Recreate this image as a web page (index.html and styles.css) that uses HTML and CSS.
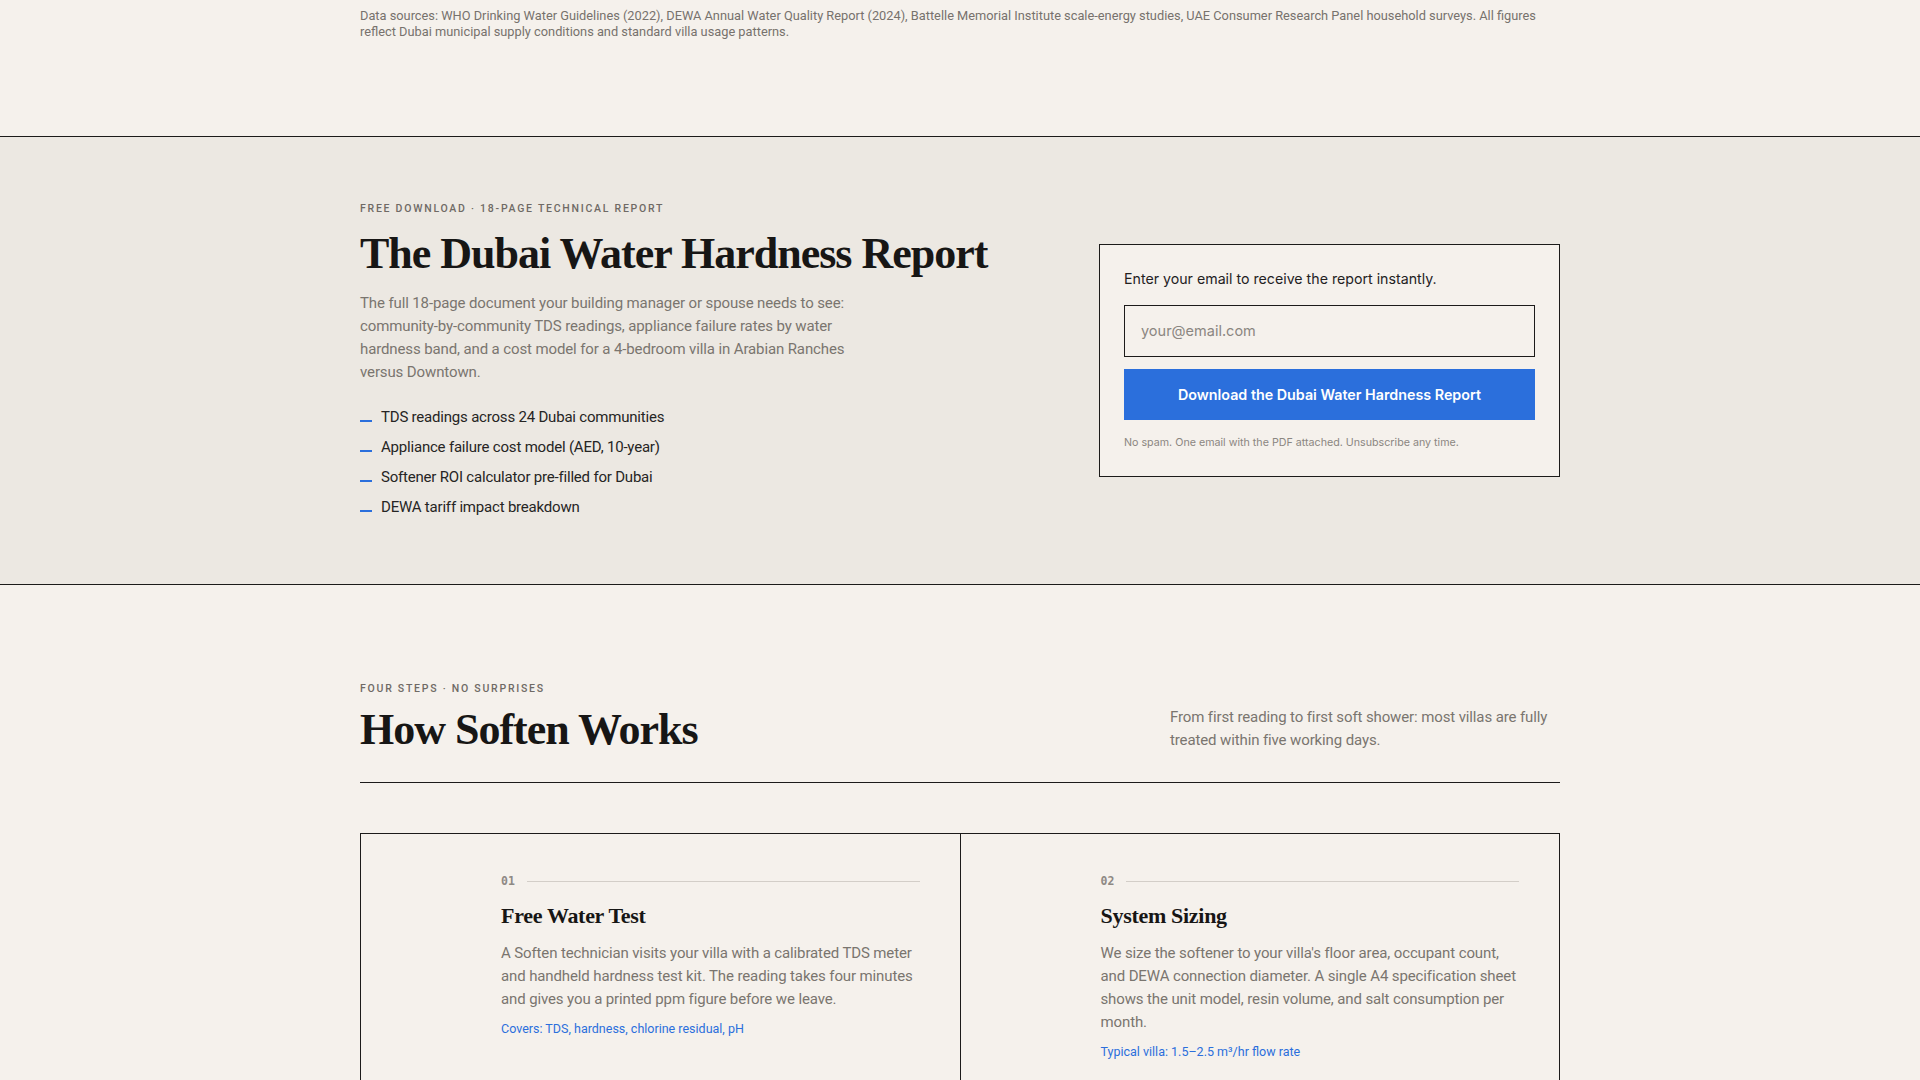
FILE: index.html
```html
<!DOCTYPE html>
<html lang="en">
<head>
<meta charset="utf-8">
<title>Soften — Dubai Water Hardness</title>
<link rel="stylesheet" href="styles.css">
</head>
<body>
<section class="sources">
  <div class="container">
    <p class="sources-text">Data sources: WHO Drinking Water Guidelines (2022), DEWA Annual Water Quality Report (2024), Battelle Memorial Institute scale-energy studies, UAE Consumer Research Panel household surveys. All figures reflect Dubai municipal supply conditions and standard villa usage patterns.</p>
  </div>
</section>

<section class="report">
  <div class="container report-grid">
    <div class="report-copy">
      <p class="eyebrow">Free Download · 18-Page Technical Report</p>
      <h1 class="display">The Dubai Water Hardness Report</h1>
      <p class="lead">The full 18-page document your building manager or spouse needs to see: community-by-community TDS readings, appliance failure rates by water hardness band, and a cost model for a 4-bedroom villa in Arabian Ranches versus Downtown.</p>
      <ul class="checklist">
        <li>TDS readings across 24 Dubai communities</li>
        <li>Appliance failure cost model (AED, 10-year)</li>
        <li>Softener ROI calculator pre-filled for Dubai</li>
        <li>DEWA tariff impact breakdown</li>
      </ul>
    </div>
    <form class="signup">
      <label class="signup-label" for="email">Enter your email to receive the report instantly.</label>
      <input class="signup-input" id="email" type="email" placeholder="your@email.com">
      <button class="signup-button" type="button">Download the Dubai Water Hardness Report</button>
      <p class="signup-note">No spam. One email with the PDF attached. Unsubscribe any time.</p>
    </form>
  </div>
</section>

<section class="how">
  <div class="container">
    <header class="how-head">
      <div>
        <p class="eyebrow">Four Steps · No Surprises</p>
        <h2 class="display display-sm-gap">How Soften Works</h2>
      </div>
      <p class="how-intro">From first reading to first soft shower: most villas are fully treated within five working days.</p>
    </header>
    <div class="steps">
      <article class="step">
        <div class="step-num"><span>01</span><i class="step-rule"></i></div>
        <h3 class="step-title">Free Water Test</h3>
        <p class="step-text">A Soften technician visits your villa with a calibrated TDS meter and handheld hardness test kit. The reading takes four minutes and gives you a printed ppm figure before we leave.</p>
        <p class="step-meta">Covers: TDS, hardness, chlorine residual, pH</p>
      </article>
      <article class="step">
        <div class="step-num"><span>02</span><i class="step-rule"></i></div>
        <h3 class="step-title">System Sizing</h3>
        <p class="step-text">We size the softener to your villa's floor area, occupant count, and DEWA connection diameter. A single A4 specification sheet shows the unit model, resin volume, and salt consumption per month.</p>
        <p class="step-meta">Typical villa: 1.5–2.5 m³/hr flow rate</p>
      </article>
      <article class="step">
        <div class="step-num"><span>03</span><i class="step-rule"></i></div>
        <h3 class="step-title">Installation</h3>
        <p class="step-text">Our plumbers fit the unit at your main inlet in a single visit, with a bypass valve so supply is never interrupted for more than an hour.</p>
        <p class="step-meta">Average install time: 3.5 hours</p>
      </article>
      <article class="step">
        <div class="step-num"><span>04</span><i class="step-rule"></i></div>
        <h3 class="step-title">Ongoing Service</h3>
        <p class="step-text">Quarterly salt top-ups and an annual resin check keep the system performing. We re-test your water each visit and share the readings.</p>
        <p class="step-meta">Includes: salt delivery, annual re-test</p>
      </article>
    </div>
  </div>
</section>
</body>
</html>
```

FILE: styles.css
```css
* { box-sizing: border-box; }

body {
  margin: 0;
  background: #f5f1ec;
  color: #1c1b1a;
  font-family: "Roboto", "Liberation Sans", sans-serif;
}

.container {
  width: 1200px;
  margin: 0 auto;
}

p, h1, h2, h3, ul { margin: 0; }

.sources {
  padding: 8px 0 96px;
  border-bottom: 1px solid #1c1b1a;
}

.sources-text {
  font-size: 12.8px;
  line-height: 16px;
  color: #77726d;
}

.report {
  background: #ece8e2;
  padding: 65px 0 66px;
  border-bottom: 1px solid #1c1b1a;
}

.report-grid {
  display: grid;
  grid-template-columns: 1fr 461px;
  align-items: center;
  column-gap: 80px;
}

.eyebrow {
  font-size: 10.5px;
  line-height: 14px;
  font-weight: 500;
  letter-spacing: 1.75px;
  text-transform: uppercase;
  color: #6f6a65;
}

.display {
  font-family: "Liberation Serif", "Times New Roman", serif;
  font-weight: 700;
  font-size: 44px;
  line-height: 52px;
  letter-spacing: -1px;
  color: #171615;
  margin-top: 12px;
}

.display-sm-gap {
  margin-top: 8px;
}

.lead {
  margin-top: 12px;
  max-width: 500px;
  font-size: 15px;
  line-height: 23px;
  letter-spacing: -0.12px;
  color: #7a756f;
}

.checklist {
  list-style: none;
  padding: 0;
  margin-top: 22px;
  display: flex;
  flex-direction: column;
  gap: 8px;
}

.checklist li {
  position: relative;
  padding-left: 21px;
  font-size: 15px;
  line-height: 22px;
  letter-spacing: -0.2px;
  color: #262524;
}

.checklist li::before {
  content: "";
  position: absolute;
  left: 0;
  top: 14px;
  width: 12px;
  height: 2px;
  background: #2b6fdc;
}

.signup {
  border: 1px solid #1c1b1a;
  background: #f5f1ec;
  padding: 24px 24px 25px;
  display: flex;
  flex-direction: column;
  font-family: "Inter", "Roboto", sans-serif;
}

.signup-label {
  font-size: 14.2px;
  line-height: 20px;
  font-weight: 400;
  color: #23211f;
}

.signup-input {
  margin-top: 16px;
  height: 52px;
  border: 1px solid #1c1b1a;
  background: transparent;
  padding: 0 16px;
  font-family: inherit;
  font-size: 14.5px;
  color: #1c1b1a;
  outline: none;
}

.signup-input::placeholder { color: #8b8681; }

.signup-button {
  margin-top: 12px;
  height: 51px;
  border: none;
  background: #2b6fdc;
  color: #ffffff;
  font-family: inherit;
  font-size: 14.3px;
  font-weight: 600;
  cursor: pointer;
}

.signup-note {
  margin-top: 15px;
  font-size: 10.7px;
  line-height: 16px;
  color: #8b8681;
}

.how {
  padding-top: 97px;
}

.how-head {
  display: flex;
  justify-content: space-between;
  align-items: flex-end;
  padding-bottom: 26px;
  border-bottom: 1px solid #1c1b1a;
}

.how-intro {
  max-width: 390px;
  font-size: 15px;
  line-height: 23px;
  letter-spacing: -0.12px;
  color: #7a756f;
  padding-bottom: 4px;
}

.steps {
  margin-top: 50px;
  display: grid;
  grid-template-columns: 1fr 1fr;
  border-top: 1px solid #1c1b1a;
  border-left: 1px solid #1c1b1a;
}

.step {
  border-right: 1px solid #1c1b1a;
  border-bottom: 1px solid #1c1b1a;
  padding: 40px 40px 40px 140px;
}

.step-num {
  display: flex;
  align-items: center;
  gap: 12px;
  font-family: "DejaVu Sans Mono", "Liberation Mono", monospace;
  font-size: 11.5px;
  font-weight: 700;
  line-height: 14px;
  color: #8e8984;
}

.step-rule {
  flex: 1;
  height: 1px;
  background: #d3cec8;
}

.step-title {
  margin-top: 14px;
  font-family: "Liberation Serif", "Times New Roman", serif;
  font-weight: 700;
  font-size: 22px;
  line-height: 28px;
  letter-spacing: -0.3px;
  color: #171615;
}

.step-text {
  margin-top: 12px;
  font-size: 15px;
  line-height: 23px;
  letter-spacing: -0.12px;
  color: #7a756f;
}

.step-meta {
  margin-top: 10px;
  font-size: 12.5px;
  line-height: 16px;
  color: #2b6fdc;
}
```
